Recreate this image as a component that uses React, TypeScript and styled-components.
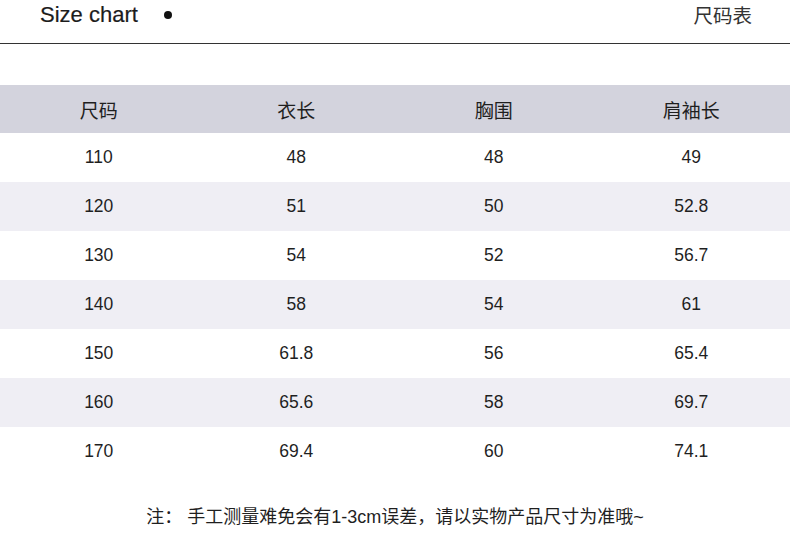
import React, { FC } from 'react';
import styled, { createGlobalStyle } from 'styled-components';

const GlobalStyle = createGlobalStyle`
  html, body {
    margin: 0;
    padding: 0;
    background: #ffffff;
  }
  body {
    font-family: 'Liberation Sans', 'Noto Sans CJK SC', sans-serif;
    color: #222222;
  }
`;

const columns = ['尺码', '衣长', '胸围', '肩袖长'];

const rows: string[][] = [
  ['110', '48', '48', '49'],
  ['120', '51', '50', '52.8'],
  ['130', '54', '52', '56.7'],
  ['140', '58', '54', '61'],
  ['150', '61.8', '56', '65.4'],
  ['160', '65.6', '58', '69.7'],
  ['170', '69.4', '60', '74.1'],
];

const App: FC = () => {
  return (
    <Page>
      <GlobalStyle />
      <TopBar>
        <Title>
          Size chart
          <Dot />
        </Title>
        <TitleCn>尺码表</TitleCn>
      </TopBar>

      <Table>
        <HeadRow>
          {columns.map(c => (
            <Cell key={c} head>
              {c}
            </Cell>
          ))}
        </HeadRow>
        {rows.map((r, i) => (
          <Row key={r[0]} shaded={i % 2 === 1}>
            {r.map((v, j) => (
              <Cell key={j}>{v}</Cell>
            ))}
          </Row>
        ))}
      </Table>

      <Note>注： 手工测量难免会有1-3cm误差，请以实物产品尺寸为准哦~</Note>
    </Page>
  );
};

const Page = styled.div`
  width: 790px;
  height: 533px;
  overflow: hidden;
  display: flex;
  flex-direction: column;
`;

const TopBar = styled.div`
  height: 43px;
  border-bottom: 1px solid #333333;
  display: flex;
  justify-content: space-between;
  align-items: flex-start;
  padding: 0 38px 0 40px;
`;

const Title = styled.div`
  display: flex;
  align-items: center;
  font-size: 22px;
  line-height: 30px;
  color: #1c1c1c;
  -webkit-text-stroke: 0.2px #1c1c1c;
`;

const Dot = styled.span`
  display: inline-block;
  width: 8px;
  height: 8px;
  border-radius: 50%;
  background: #111111;
  margin-left: 26px;
  margin-top: -1px;
`;

const TitleCn = styled.div`
  font-family: 'Noto Sans CJK SC', sans-serif;
  font-size: 19.5px;
  line-height: 30px;
  color: #333333;
`;

const Table = styled.div`
  margin-top: 41px;
  display: flex;
  flex-direction: column;
`;

const Row = styled.div<{ shaded?: boolean }>`
  display: grid;
  grid-template-columns: repeat(4, 1fr);
  height: 49px;
  align-items: center;
  background: ${p => (p.shaded ? '#efeef4' : '#ffffff')};
`;

const HeadRow = styled(Row)`
  height: 48px;
  background: #d3d3dd;
`;

const Cell = styled.div<{ head?: boolean }>`
  text-align: center;
  font-family: ${p =>
    p.head ? "'Noto Sans CJK SC', sans-serif" : "'Liberation Sans', sans-serif"};
  font-size: ${p => (p.head ? '19px' : '17.5px')};
  color: #1f1f1f;
`;

const Note = styled.div`
  margin-top: 26px;
  text-align: center;
  font-family: 'Liberation Sans', 'Noto Sans CJK SC', sans-serif;
  font-size: 18px;
  color: #1f1f1f;
  white-space: pre;
`;

export default App;
